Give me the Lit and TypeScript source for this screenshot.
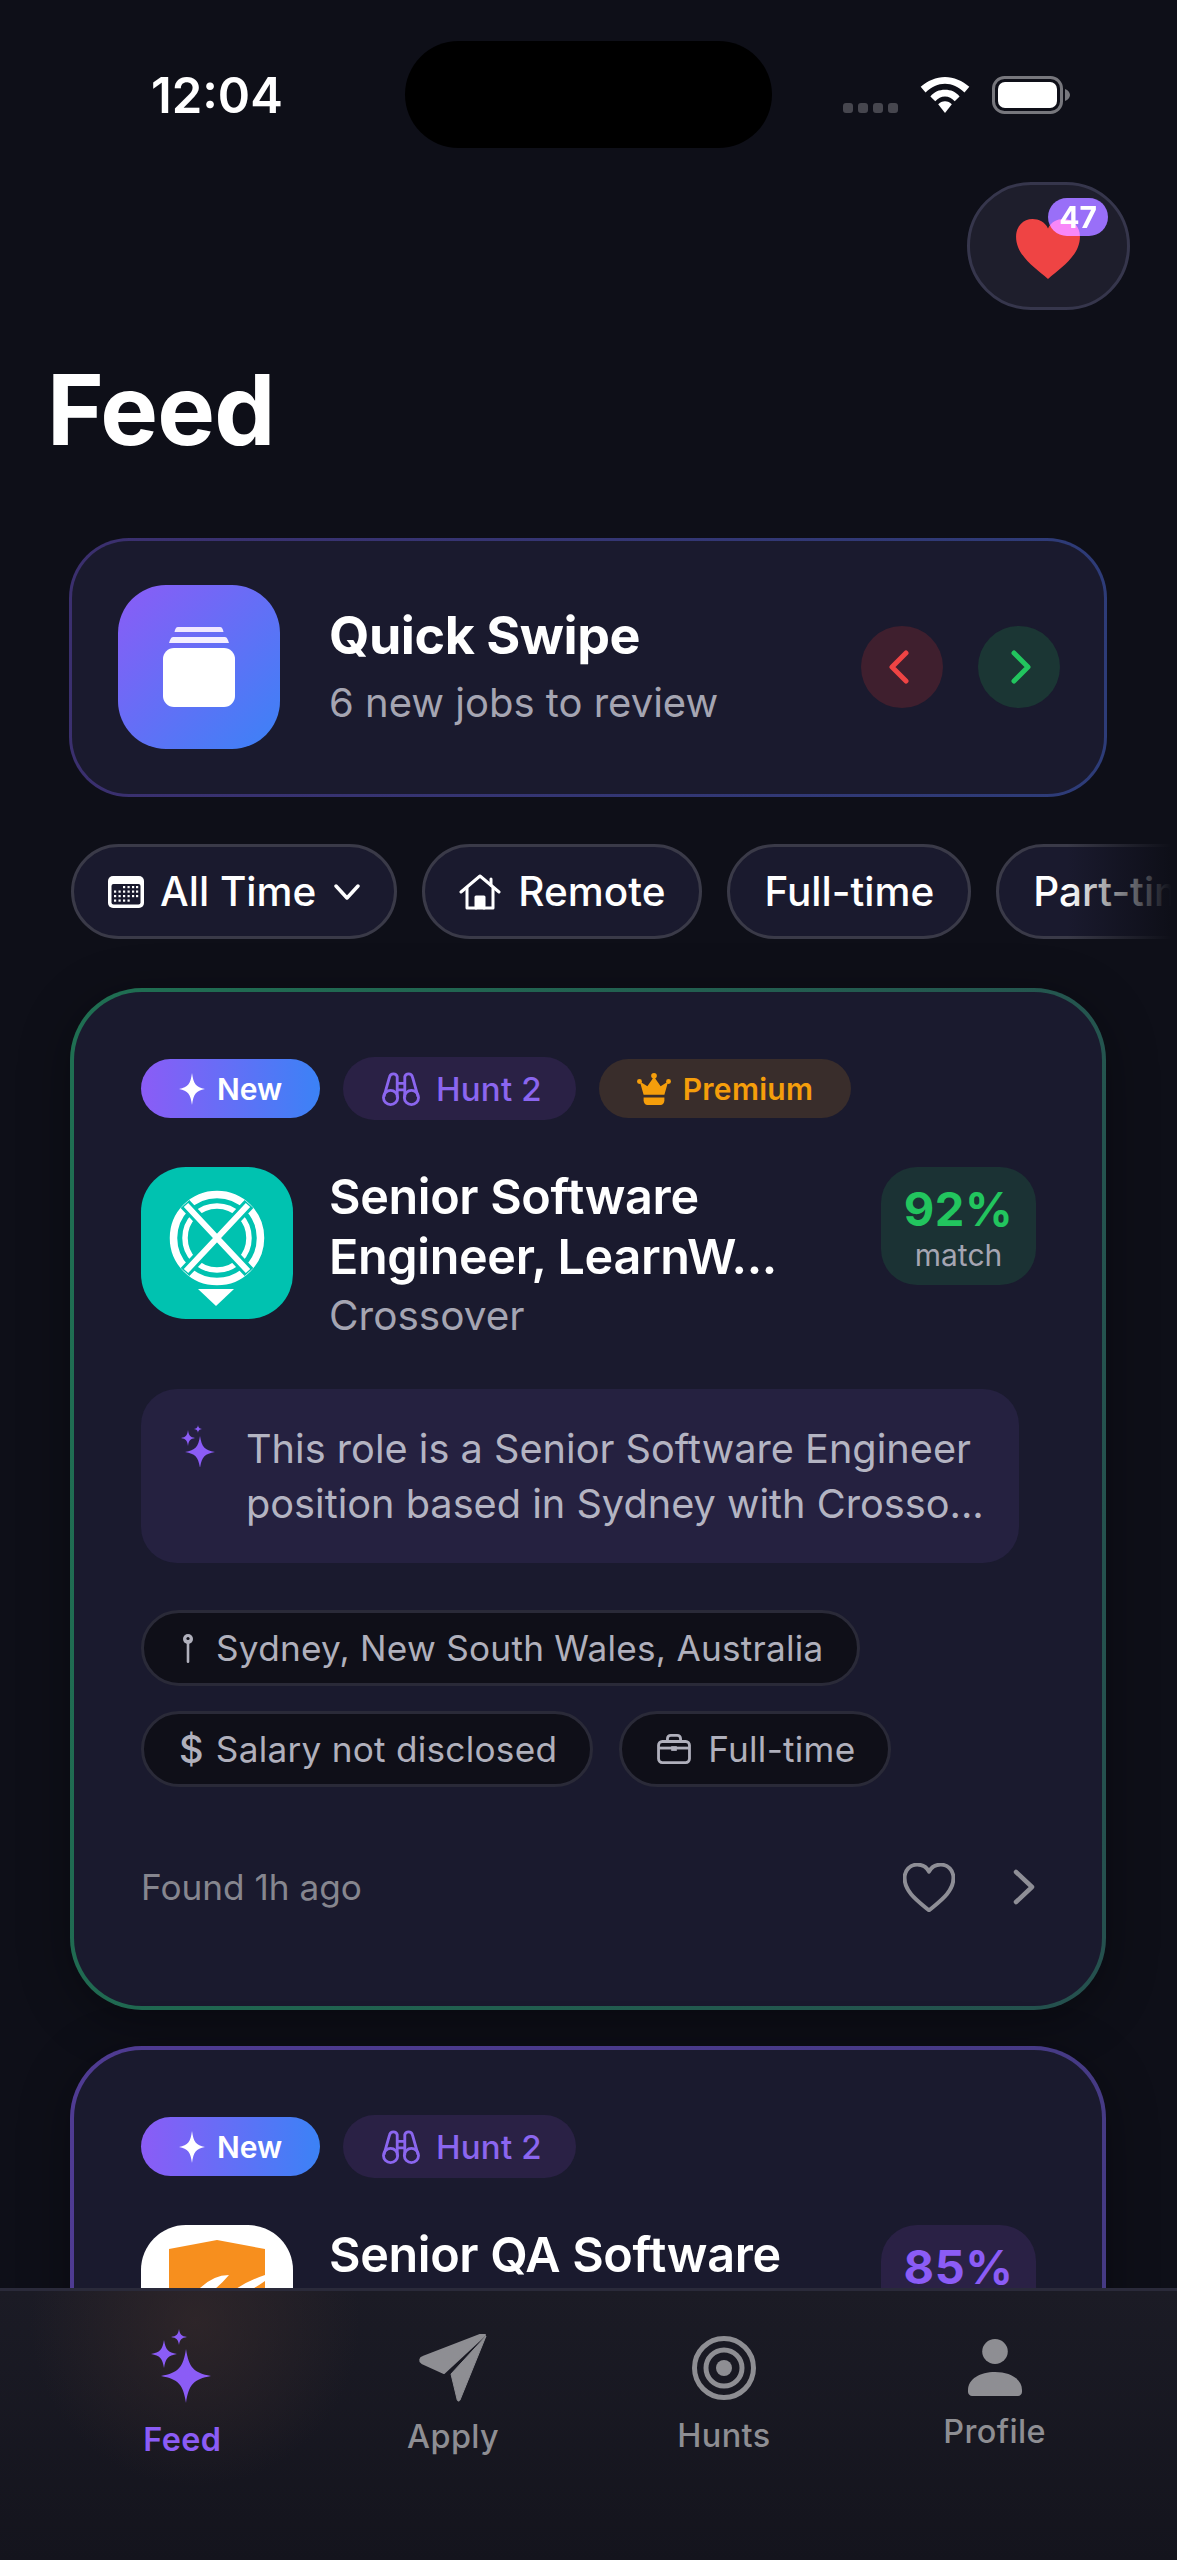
import { LitElement, html, css, svg } from "lit";
import { customElement } from "lit/decorators.js";

const star = (cx: number, cy: number, rx: number, ry: number) => {
  const a = 0.12, b = 0.3;
  return `M${cx} ${cy - ry}C${cx + rx * a} ${cy - ry * b} ${cx + rx * b} ${cy - ry * a} ${cx + rx} ${cy}C${cx + rx * b} ${cy + ry * a} ${cx + rx * a} ${cy + ry * b} ${cx} ${cy + ry}C${cx - rx * a} ${cy + ry * b} ${cx - rx * b} ${cy + ry * a} ${cx - rx} ${cy}C${cx - rx * b} ${cy - ry * a} ${cx - rx * a} ${cy - ry * b} ${cx} ${cy - ry}Z`;
};

const heartPath = "M33 60C20 49 2 37 2 19C2 9 9 2 18 2C24 2 30 5 33 11C36 5 42 2 48 2C57 2 64 9 64 19C64 37 46 49 33 60Z";

const iconSpark = html`<svg class="i-spark" viewBox="0 0 26 32"><path d=${star(13, 16, 13, 16)} fill="#fff"/></svg>`;
const iconBino = html`<svg class="i-bino" viewBox="0 0 40 38" fill="none" stroke="currentColor" stroke-width="3"><circle cx="9" cy="28" r="7.5"/><circle cx="31" cy="28" r="7.5"/><path d="M2 27L8 6C9 2 15 2 16 6V28M38 27L32 6C31 2 25 2 24 6V28M16 13H24M16 20H24"/></svg>`;
const iconCrown = html`<svg class="i-crown" viewBox="0 0 36 36" fill="#f59e0b"><circle cx="18" cy="4" r="3"/><circle cx="2.6" cy="10" r="2.6"/><circle cx="33.4" cy="10" r="2.6"/><path d="M18 5L25 15L33 10L29 24H7L3 10L11 15Z"/><path d="M7 27H29V30C29 33 27 35 25 35H11C9 35 7 33 7 30Z"/></svg>`;
const iconCal = html`<svg class="i-cal" viewBox="0 0 36 32"><rect width="36" height="32" rx="5" fill="#fff"/><rect x="3.5" y="8" width="29" height="20.5" rx="2" fill="#1a1a2e"/><g fill="#fff">${[11, 15.5, 20, 24.5].flatMap((y, r) => [7, 11.5, 16, 20.5, 25, 29].filter((_, c) => !(r === 0 && c < 2) && !(r === 3 && c > 3)).map((x) => svg`<rect x=${x - 1} y=${y - 1} width="2.2" height="2.2"/>`))}</g></svg>`;
const iconHouse = html`<svg class="i-house" viewBox="0 0 42 36" fill="none" stroke="#fff" stroke-width="3" stroke-linejoin="round" stroke-linecap="round"><path d="M2 18L21 2L40 18"/><path d="M32 5V11"/><path d="M8 14V34H34V14"/><path d="M17 34V23H25V34" fill="#fff"/></svg>`;
const iconPin = html`<svg class="i-pin" viewBox="0 0 12 30"><circle cx="6" cy="6" r="5" fill="#b0b0bc"/><circle cx="6" cy="5.5" r="1.6" fill="#0f0f18"/><rect x="4.7" y="9" width="2.6" height="21" rx="1.3" fill="#b0b0bc"/></svg>`;
const iconCase = html`<svg class="i-case" viewBox="0 0 36 32" fill="none" stroke="#b0b0bc" stroke-width="3"><rect x="1.5" y="8" width="33" height="22.5" rx="4"/><path d="M11 8V5C11 3 12.5 1.5 14.5 1.5H21.5C23.5 1.5 25 3 25 5V8"/><path d="M2 15H34"/><rect x="15" y="13" width="6" height="5" fill="#b0b0bc" stroke="none"/></svg>`;
const sparkles = html`<svg class="i-sparkles" viewBox="0 0 34 42" fill="#8b5cf6"><path d=${star(19, 27, 15, 16)}/><path d=${star(7, 13, 7, 8)}/><path d=${star(17, 4, 4, 4)}/></svg>`;

const logoCross = html`<svg class="logo" viewBox="0 0 152 152"><rect width="152" height="152" fill="#00c2b0"/>
  <circle cx="76" cy="71" r="43.500" fill="none" stroke="#fff" stroke-width="7.500"/>
  <circle cx="76" cy="71" r="32" fill="none" stroke="#fff" stroke-width="5.500"/>
  <path d="M44 37L108 105M108 37L44 105" stroke="#00c2b0" stroke-width="12"/>
  <path d="M45 38L107 104M107 38L45 104" stroke="#fff" stroke-width="6"/>
  <path d="M57 122H93L75 139Z" fill="#fff"/></svg>`;
const logoOrange = html`<svg class="logo" viewBox="0 0 152 152"><rect width="152" height="152" fill="#fff"/>
  <path d="M28 24L76 15L124 24V140H28Z" fill="#f78f1e"/>
  <path d="M58 64Q72 50 88 50Q78 62 66 70Q55 72 58 64ZM92 66Q106 56 124 50V56Q110 66 98 70Q88 72 92 66Z" fill="#fff"/></svg>`;

type Job = {
  tone: "green" | "purple"; title: string[]; company: string; match: string; logo: unknown;
  premium: boolean; summary: string[];
};

const jobs: Job[] = [
  { tone: "green", title: ["Senior Software", "Engineer, LearnW..."], company: "Crossover", match: "92%", logo: logoCross, premium: true,
    summary: ["This role is a Senior Software Engineer", "position based in Sydney with Crosso..."] },
  { tone: "purple", title: ["Senior QA Software", "Engineer"], company: "Trimble", match: "85%", logo: logoOrange, premium: false,
    summary: [] },
];

@customElement("app-root")
export class AppRoot extends LitElement {
  static styles = css`
    :host { display: block; font-family: Inter, "Noto Sans", sans-serif; color: #fff; }
    * { box-sizing: border-box; }
    .frame { position: relative; width: 1177px; height: 2560px; overflow: hidden; background: #0e0f18; }
    svg { display: block; flex: none; }

    .status { display: flex; align-items: flex-start; height: 182px; }
    .time { margin: 67px 0 0 151px; width: 254px; font-size: 49px; line-height: 58px; font-weight: 600; }
    .island { width: 367px; height: 107px; margin-top: 41px; border-radius: 54px; background: #000; }
    .sys { display: flex; align-items: flex-end; margin: 76px 0 0 71px; }
    .dots { display: flex; gap: 5px; margin-bottom: 1px; }
    .dots i { width: 10px; height: 10px; border-radius: 3px; background: #46464e; }
    .wifi { width: 50px; height: 36px; margin: 0 22px 1px; }
    .batt { width: 78px; height: 38px; }

    .fav-row { display: flex; justify-content: flex-end; padding-right: 47px; }
    .fav { position: relative; width: 163px; height: 128px; border-radius: 64px; background: #1e1e2c; border: 3px solid #36364c; display: flex; align-items: center; justify-content: center; isolation: isolate; }
    .fav .h { width: 68px; height: 64px; margin: 6px 0 0 -1px; }
    .count { position: absolute; left: 78px; top: 13px; width: 60px; height: 38px; border-radius: 19px; background: #8b5cf6; mix-blend-mode: screen; }
    .count-t { position: absolute; left: 78px; top: 13px; width: 60px; height: 38px; text-align: center; font-size: 30px; line-height: 38px; font-weight: 700; }

    h1 { margin: 52px 0 80px; padding-left: 47px; font-size: 97px; line-height: 96px; font-weight: 700; letter-spacing: -.8px; }

    .quick { margin: 0 70px 0 69px; height: 259px; border-radius: 60px; border: 3px solid transparent;
      background: linear-gradient(#1a1a2e, #1a1a2e) padding-box, linear-gradient(100deg, #3b2f6e, #2d3c78) border-box;
      display: flex; align-items: center; padding: 0 44px 2px 46px; }
    .q-icon { width: 162px; height: 164px; border-radius: 48px; background: linear-gradient(135deg, #8b5cf6, #3b82f6); display: flex; align-items: center; justify-content: center; }
    .q-icon svg { width: 72px; height: 80px; }
    .q-text { margin-left: 49px; flex: 1; }
    .q-title { font-size: 52px; line-height: 62px; font-weight: 700; letter-spacing: -.45px; }
    .q-sub { font-size: 40px; line-height: 50px; color: #a5a5b2; margin-top: 11px; }
    .round { width: 82px; height: 82px; border-radius: 50%; display: flex; align-items: center; justify-content: center; }
    .round svg { width: 20px; height: 34px; }
    .round.no { background: #3f1f2e; padding-right: 6px; }
    .round.yes { background: #1b3634; margin-left: 35px; padding-left: 4px; }

    .chips { position: relative; display: flex; gap: 25px; margin: 47px 0 49px; padding-left: 71px; overflow: hidden; }
    .chips::after { content: ""; position: absolute; top: 0; bottom: 0; right: 0; width: 110px; background: linear-gradient(90deg, rgba(14,15,24,0), #0e0f18 95%); }
    .chip { flex: none; height: 95px; border-radius: 48px; border: 3px solid #3a3a48; background: #1a1a2e; display: flex; align-items: center; padding: 0 34px; gap: 16px; font-size: 40.5px; font-weight: 500; white-space: nowrap; }
    .i-cal { width: 36px; height: 32px; }
    .i-house { width: 42px; height: 36px; margin-right: 1px; }
    .chev-d { width: 26px; height: 16px; margin-left: 2px; }

    .card { margin: 0 71px 36px 70px; padding: 65px 66px 0 67px; height: 1022px; border-radius: 72px; border: 4px solid transparent; box-shadow: 0 10px 50px rgba(0,0,0,.35); }
    .card.green { background: linear-gradient(#1a1a2e, #1a1a2e) padding-box, linear-gradient(100deg, #1f6f52, #25504e) border-box; }
    .card.purple { background: linear-gradient(#1a1a2e, #1a1a2e) padding-box, linear-gradient(100deg, #4f3b92, #443a82) border-box; }

    .badges { display: flex; align-items: center; gap: 23px; height: 63px; }
    .badge { display: flex; align-items: center; border-radius: 32px; white-space: nowrap; }
    .b-new { width: 179px; height: 59px; justify-content: center; gap: 12px; background: linear-gradient(90deg, #8b5cf6, #3b82f6); font-size: 30px; font-weight: 600; }
    .i-spark { width: 26px; height: 32px; }
    .b-hunt { width: 233px; height: 63px; padding-left: 39px; gap: 16px; background: #2a2145; color: #8b66ef; font-size: 33px; font-weight: 500; letter-spacing: .2px; }
    .i-bino { width: 38px; height: 36px; }
    .b-prem { width: 252px; height: 59px; justify-content: center; gap: 12px; background: #392d2b; color: #f59e0b; font-size: 30px; font-weight: 600; letter-spacing: .3px; }
    .i-crown { width: 34px; height: 34px; }

    .head { display: flex; margin-top: 47px; height: 177px; align-items: flex-start; }
    .logo-wrap { width: 152px; height: 152px; border-radius: 45px; overflow: hidden; flex: none; }
    .logo { width: 152px; height: 152px; }
    .h-text { margin-left: 36px; flex: 1; }
    .h-title { font-size: 48.5px; line-height: 60px; font-weight: 600; letter-spacing: -.35px; white-space: nowrap; }
    .h-company { font-size: 40.5px; line-height: 58px; color: #a5a5b2; }
    .match { width: 155px; height: 118px; border-radius: 36px; flex: none; display: flex; flex-direction: column; align-items: center; padding-top: 14px; }
    .green .match { background: #1b3234; }
    .purple .match { background: #2a2145; }
    .m-val { font-size: 47px; line-height: 56px; font-weight: 700; letter-spacing: .5px; }
    .green .m-val { color: #22c55e; }
    .purple .m-val { color: #8b5cf6; }
    .m-lbl { font-size: 30px; line-height: 36px; color: #a5a5b2; }

    .summary { margin-top: 45px; width: 878px; height: 174px; border-radius: 36px; background: #252140; display: flex; padding: 33px 0 0 40px; gap: 31px; }
    .i-sparkles { width: 34px; height: 42px; margin-top: 3px; }
    .s-text { font-size: 39.7px; line-height: 55px; color: #b4b4c2; white-space: nowrap; }

    .tags { margin-top: 47px; display: flex; flex-direction: column; gap: 25px; }
    .tag-row { display: flex; gap: 26px; }
    .tag { height: 76px; border-radius: 38px; border: 3px solid #2a2a38; background: #0f0f18; display: flex; align-items: center; padding: 0 33px 0 35px; gap: 12px; font-size: 35.2px; color: #b0b0bc; white-space: nowrap; letter-spacing: .25px; }
    .i-pin { width: 12px; height: 30px; margin: 0 10px 0 3px; }
    .i-case { width: 34px; height: 30px; margin-right: 5px; }
    .dollar { font-size: 38px; font-weight: 500; }

    .foot { margin-top: 75px; height: 50px; display: flex; align-items: center; font-size: 35.2px; color: #86868f; }
    .foot span { flex: 1; }
    .foot .ho { width: 52px; height: 49px; }
    .foot .ch { width: 22px; height: 36px; margin: 0 1px 0 58px; }

    .tabbar { position: absolute; left: 0; right: 0; bottom: 0; height: 272px; border-top: 3px solid #2a2a3a; background: radial-gradient(circle 165px at 195px 30px, rgba(58,44,44,.6), rgba(58,44,44,0)), linear-gradient(#1b1b25, #14141d); display: flex; align-items: flex-start; padding: 0 47px; }
    .tab { width: 271px; height: 209px; display: flex; flex-direction: column; align-items: center; justify-content: center; gap: 16px; font-size: 32.4px; line-height: 40px; letter-spacing: .4px; color: #8e8e93; font-weight: 500; }
    .tab.on { color: #8b5cf6; font-weight: 600; }
    .t-feed { width: 64px; height: 76px; margin-top: -3px; }
    .t-apply { width: 70px; height: 70px; margin: -2px 0; }
    .t-hunts { width: 64px; height: 64px; }
    .t-prof { width: 54px; height: 57px; }
  `;

  private job(j: Job) {
    return html`<div class="card ${j.tone}">
      <div class="badges">
        <div class="badge b-new">${iconSpark}New</div>
        <div class="badge b-hunt">${iconBino}Hunt 2</div>
        ${j.premium ? html`<div class="badge b-prem">${iconCrown}Premium</div>` : ""}
      </div>
      <div class="head">
        <div class="logo-wrap">${j.logo}</div>
        <div class="h-text">
          ${j.title.map((t) => html`<div class="h-title">${t}</div>`)}
          <div class="h-company">${j.company}</div>
        </div>
        <div class="match"><div class="m-val">${j.match}</div><div class="m-lbl">match</div></div>
      </div>
      ${j.summary.length ? html`
        <div class="summary">${sparkles}<div class="s-text">${j.summary.map((s) => html`<div>${s}</div>`)}</div></div>
        <div class="tags">
          <div class="tag-row"><div class="tag">${iconPin}Sydney, New South Wales, Australia</div></div>
          <div class="tag-row">
            <div class="tag"><span class="dollar">$</span>Salary not disclosed</div>
            <div class="tag">${iconCase}Full-time</div>
          </div>
        </div>
        <div class="foot"><span>Found 1h ago</span>
          <svg class="ho" viewBox="0 0 66 62" fill="none" stroke="#8e8e96" stroke-width="5" stroke-linejoin="round"><path d=${heartPath}/></svg>
          <svg class="ch" viewBox="0 0 22 36" fill="none" stroke="#8e8e96" stroke-width="4.5" stroke-linecap="round" stroke-linejoin="round"><path d="M3 3L19 18L3 33"/></svg>
        </div>` : ""}
    </div>`;
  }

  render() {
    return html`<div class="frame">
      <div class="status">
        <div class="time">12:04</div>
        <div class="island"></div>
        <div class="sys">
          <div class="dots"><i></i><i></i><i></i><i></i></div>
          <svg class="wifi" viewBox="0 0 50 37" fill="#fff"><path d="M25 0C34 0 43 4 50 10L45 16C39 10 32 7 25 7C18 7 11 10 5 16L0 10C7 4 16 0 25 0Z"/><path d="M25 13C31 13 36 15 40 20L35 25C32 22 29 20 25 20C21 20 18 22 15 25L10 20C14 15 19 13 25 13Z"/><path d="M25 25C28 25 30 26 32 28L25 37L18 28C20 26 22 25 25 25Z"/></svg>
          <svg class="batt" viewBox="0 0 78 38"><rect x="1.5" y="1.5" width="68" height="35" rx="11" fill="none" stroke="#77777d" stroke-width="3"/><rect x="6" y="6" width="59" height="26" rx="7" fill="#fff"/><path d="M73 13C76 14 78 16.500 78 19C78 21.500 76 24 73 25Z" fill="#77777d"/></svg>
        </div>
      </div>
      <div class="fav-row"><div class="fav">
        <svg class="h" viewBox="0 0 66 62" fill="#ef4444"><path d=${heartPath}/></svg>
        <div class="count"></div><div class="count-t">47</div>
      </div></div>
      <h1>Feed</h1>
      <div class="quick">
        <div class="q-icon"><svg viewBox="0 0 72 80" fill="#fff"><path d="M15 0H57C59 0 60 2 60.500 5H11.500C12 2 13 0 15 0Z" fill="#f0e8ff"/><path d="M10 10H62C64 10 65 13 66 16H6C7 13 8 10 10 10Z" fill="#f4efff"/><rect y="21" width="72" height="59" rx="11"/></svg></div>
        <div class="q-text"><div class="q-title">Quick Swipe</div><div class="q-sub">6 new jobs to review</div></div>
        <div class="round no"><svg viewBox="0 0 20 34" fill="none" stroke="#ef4444" stroke-width="5" stroke-linecap="round" stroke-linejoin="round"><path d="M17 3L3 17L17 31"/></svg></div>
        <div class="round yes"><svg viewBox="0 0 20 34" fill="none" stroke="#22c55e" stroke-width="5" stroke-linecap="round" stroke-linejoin="round"><path d="M3 3L17 17L3 31"/></svg></div>
      </div>
      <div class="chips">
        <div class="chip">${iconCal}All Time<svg class="chev-d" viewBox="0 0 26 16" fill="none" stroke="#fff" stroke-width="3.500" stroke-linecap="round" stroke-linejoin="round"><path d="M2 2L13 14L24 2"/></svg></div>
        <div class="chip">${iconHouse}Remote</div>
        <div class="chip">Full-time</div>
        <div class="chip">Part-time</div>
      </div>
      ${jobs.map((j) => this.job(j))}
      <div class="tabbar">
        <div class="tab on"><svg class="t-feed" viewBox="0 0 64 76" fill="#8b5cf6"><path d=${star(36, 48, 25, 27)}/><path d=${star(14, 26, 13, 14)}/><path d=${star(29, 9, 8, 8)}/></svg>Feed</div>
        <div class="tab"><svg class="t-apply" viewBox="0 0 70 70" fill="#8e8e93"><path d="M67 2L26 40L4 30C1 28 2 25 5 24L62 2Z" stroke="#8e8e93" stroke-width="2" stroke-linejoin="round"/><path d="M68 3L42 67C41 69 39 68 39 66L33 41Z" stroke="#8e8e93" stroke-width="1" stroke-linejoin="round"/></svg>Apply</div>
        <div class="tab"><svg class="t-hunts" viewBox="0 0 64 64" fill="none" stroke="#8e8e93" stroke-width="5"><circle cx="32" cy="32" r="29.500"/><circle cx="32" cy="32" r="18"/><circle cx="32" cy="32" r="8" fill="#8e8e93" stroke="none"/></svg>Hunts</div>
        <div class="tab"><svg class="t-prof" viewBox="0 0 54 57" fill="#8e8e93"><ellipse cx="27" cy="12.500" rx="12.800" ry="12.500"/><path d="M0 51C0 40 12 33 27 33C42 33 54 40 54 51V53C54 55 52 57 50 57H4C2 57 0 55 0 53Z"/></svg>Profile</div>
      </div>
    </div>`;
  }
}
